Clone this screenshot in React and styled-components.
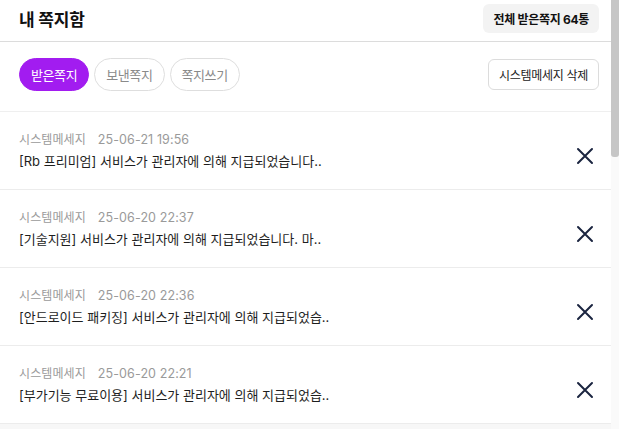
import React from 'react';
import styled, { createGlobalStyle } from 'styled-components';

const GlobalStyle = createGlobalStyle`
  html, body { margin: 0; padding: 0; background: #fff; overflow: hidden; }
  body { font-family: Inter, "Noto Sans CJK KR", "Noto Sans", sans-serif; color: #222; }
  * { box-sizing: border-box; }
`;

const Page = styled.div`
  height: 100vh;
  overflow: hidden;
  padding-right: 8px;
`;

const ScrollTrack = styled.div`
  position: fixed;
  top: 0;
  right: 0;
  width: 8px;
  height: 100vh;
  background: #fafafa;
`;

const ScrollThumb = styled.div`
  width: 100%;
  height: 157px;
  background: #c6c6c6;
  border-radius: 0 0 3px 3px;
`;

const Header = styled.header`
  display: flex;
  align-items: center;
  justify-content: space-between;
  height: 42px;
  padding: 0 12px 4px 19px;
  border-bottom: 1px solid #dcdcdc;
`;

const Title = styled.h1`
  margin: 0;
  font-size: 17px;
  font-weight: 700;
  letter-spacing: -0.2px;
  color: #111;
`;

const CountBadge = styled.div`
  display: flex;
  align-items: center;
  height: 29px;
  padding: 0 10px;
  border-radius: 6px;
  background: #f3f3f3;
  font-size: 12px;
  font-weight: 700;
  letter-spacing: -0.3px;
  color: #111;
`;

const Toolbar = styled.div`
  display: flex;
  align-items: center;
  justify-content: space-between;
  height: 70px;
  padding: 0 12px 4px 19px;
  border-bottom: 1px solid #efefef;
`;

const Tabs = styled.div`
  display: flex;
  gap: 5px;
`;

const Tab = styled.button`
  height: 33px;
  padding: 0 11px;
  border-radius: 17px;
  border: 1px solid ${p => (p.$active ? '#a21cf0' : '#dedede')};
  background: ${p => (p.$active ? '#a21cf0' : '#fff')};
  color: ${p => (p.$active ? '#fff' : '#8a8a8a')};
  font-family: inherit;
  font-size: 13px;
  letter-spacing: -0.4px;
`;

const OutlineButton = styled.button`
  height: 31px;
  padding: 0 10px;
  border-radius: 6px;
  border: 1px solid #dcdcdc;
  background: #fff;
  color: #222;
  font-family: inherit;
  font-size: 12px;
  letter-spacing: -0.3px;
`;

const List = styled.ul`
  list-style: none;
  margin: 0;
  padding: 0;
`;

const Item = styled.li`
  display: flex;
  align-items: center;
  justify-content: space-between;
  height: 78px;
  padding: 0 17px 0 19px;
  border-bottom: 1px solid #ececec;
  background: ${p => (p.$muted ? '#f7f7f7' : '#fff')};
`;

const Body = styled.div`
  display: flex;
  flex-direction: column;
  gap: 2px;
`;

const Meta = styled.div`
  display: flex;
  gap: 12px;
  font-size: 12px;
  letter-spacing: 0.1px;
  color: #9a9a9a;
  line-height: 18px;
`;

const Date = styled.span`
  font-size: 12.5px;
`;

const Text = styled.div`
  font-size: 13px;
  letter-spacing: 0;
  color: #1e1e1e;
  line-height: 20px;
`;

const Close = styled.button`
  display: flex;
  margin-top: 10px;
  padding: 0;
  border: none;
  background: none;
  color: #1b2540;
`;

const messages = [
  { date: '25-06-21 19:56', text: '[Rb 프리미엄] 서비스가 관리자에 의해 지급되었습니다..' },
  { date: '25-06-20 22:37', text: '[기술지원] 서비스가 관리자에 의해 지급되었습니다. 마..' },
  { date: '25-06-20 22:36', text: '[안드로이드 패키징] 서비스가 관리자에 의해 지급되었습..' },
  { date: '25-06-20 22:21', text: '[부가기능 무료이용] 서비스가 관리자에 의해 지급되었습..' },
];

const XIcon = () => (
  <svg width="18" height="18" viewBox="0 0 18 18" fill="none" stroke="currentColor" strokeWidth="2" strokeLinecap="round">
    <path d="M2 2 L16 16 M16 2 L2 16" />
  </svg>
);

export default function App() {
  return (
    <Page>
      <GlobalStyle />
      <Header>
        <Title>내 쪽지함</Title>
        <CountBadge>전체 받은쪽지 64통</CountBadge>
      </Header>
      <Toolbar>
        <Tabs>
          <Tab $active>받은쪽지</Tab>
          <Tab>보낸쪽지</Tab>
          <Tab>쪽지쓰기</Tab>
        </Tabs>
        <OutlineButton>시스템메세지 삭제</OutlineButton>
      </Toolbar>
      <List>
        {messages.map((m, i) => (
          <Item key={i}>
            <Body>
              <Meta>
                <span>시스템메세지</span>
                <Date>{m.date}</Date>
              </Meta>
              <Text>{m.text}</Text>
            </Body>
            <Close aria-label="삭제"><XIcon /></Close>
          </Item>
        ))}
        <Item $muted />
      </List>
      <ScrollTrack>
        <ScrollThumb />
      </ScrollTrack>
    </Page>
  );
}
